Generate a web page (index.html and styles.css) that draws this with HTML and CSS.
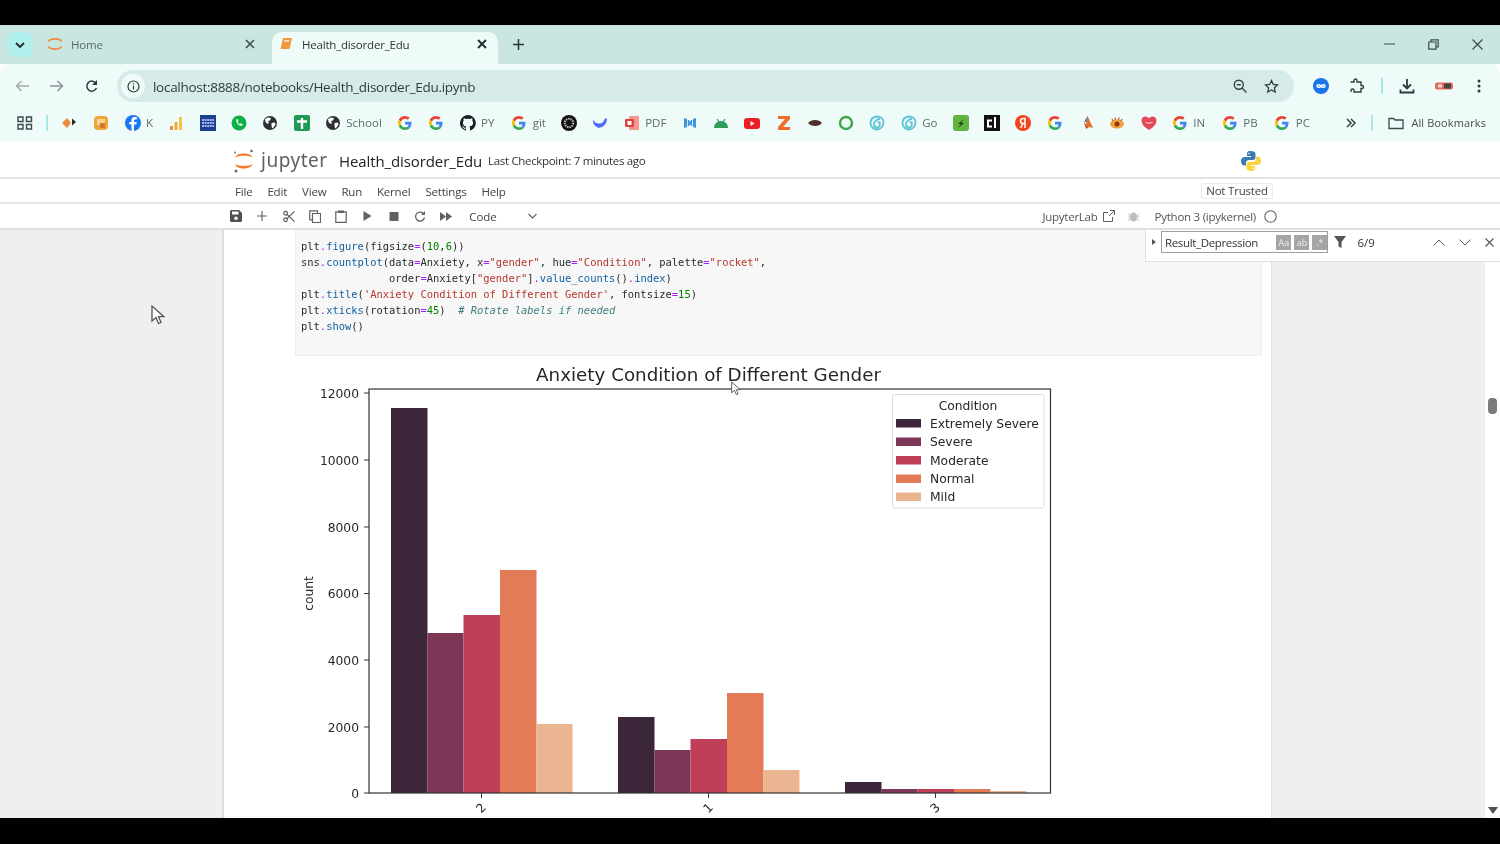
FILE: index.html
```html
<!DOCTYPE html>
<html lang="en">
<head>
<meta charset="utf-8">
<title>Health_disorder_Edu</title>
<link rel="stylesheet" href="styles.css">
</head>
<body>
<svg class="defs" width="0" height="0" aria-hidden="true">
  <defs>
    <symbol id="g" viewBox="0 0 48 48">
      <path fill="#EA4335" d="M24 9.5c3.5 0 6.6 1.2 9.1 3.6l6.8-6.8C35.8 2.4 30.3 0 24 0 14.6 0 6.5 5.4 2.6 13.2l7.9 6.1C12.4 13.6 17.7 9.5 24 9.5z"/>
      <path fill="#4285F4" d="M46.5 24.5c0-1.6-.1-3.1-.4-4.5H24v9h12.7c-.6 3-2.2 5.5-4.7 7.2l7.3 5.7c4.3-4 6.7-9.8 6.7-17.4z"/>
      <path fill="#FBBC05" d="M10.5 28.7c-.5-1.5-.8-3-.8-4.7s.3-3.2.8-4.7l-7.9-6.1C1 16.4 0 20.1 0 24s1 7.6 2.6 10.8l7.9-6.1z"/>
      <path fill="#34A853" d="M24 48c6.5 0 11.9-2.1 15.9-5.8l-7.3-5.7c-2.1 1.4-4.9 2.3-8.6 2.3-6.3 0-11.6-4.2-13.5-9.9l-7.9 6.1C6.5 42.6 14.6 48 24 48z"/>
    </symbol>
    <symbol id="globe" viewBox="0 0 16 16">
      <circle cx="8" cy="8" r="7" fill="#2b2f33"/>
      <path fill="#fff" d="M3 4l3-1.5 3 .5-1 2.5-2 .5L7 8l-1.5 1L3.5 7zM9.5 8l3.5-.5.5 2-2 3-1.5 1-.5-3z"/>
    </symbol>
    <symbol id="wave" viewBox="0 0 16 16">
      <path fill="none" stroke="#5cc6d8" stroke-width="1.8" d="M8 1.5c4 0 6.5 2.7 6.5 6 0 4-3 7-6.5 7S1.5 11.5 1.5 8 4 2 8 1.5zM11 4C7.5 4 5 6.5 5 9.5c0 2 1.5 3 3 3s3-1.3 3-3-1.2-2.5-2.5-2.5"/>
    </symbol>
    <symbol id="cursor" viewBox="0 0 14 20">
      <path fill="#fff" stroke="#555" stroke-width="1.3" d="M1 1v15l4-3.5 2.5 6 2.500-1-2.500-5.800H13z"/>
    </symbol>
  </defs>
</svg>

<div class="blackbar top"></div>
<div class="window">
  <div class="tabstrip">
    <button class="tabsearch"><svg width="10" height="6" viewBox="0 0 10 6"><path d="M1 1l4 4 4-4" fill="none" stroke="#1f2a2a" stroke-width="1.8"/></svg></button>
    <div class="tab inactive">
      <svg class="favicon" width="16" height="16" viewBox="0 0 16 16"><path fill="none" stroke="#f08a3c" stroke-width="1.7" d="M1.5 5.5C3 2 13 2 14.5 5.5M1.5 10.5C3 14 13 14 14.5 10.5"/></svg>
      <span class="tabtitle">Home</span>
      <svg class="tabx" width="10" height="10" viewBox="0 0 10 10"><path d="M1 1l8 8M9 1l-8 8" stroke="#3f4b4b" stroke-width="1.6"/></svg>
    </div>
    <div class="tab active">
      <svg class="favicon" width="14" height="14" viewBox="0 0 14 14"><path fill="#f0983c" d="M4 1h9l-2.5 11H1.5z"/><path fill="#fff" d="M5.5 3.2h5l-.3 1.2h-5z"/></svg>
      <span class="tabtitle">Health_disorder_Edu</span>
      <svg class="tabx" width="10" height="10" viewBox="0 0 10 10"><path d="M1 1l8 8M9 1l-8 8" stroke="#1f2a2a" stroke-width="1.8"/></svg>
    </div>
    <svg class="newtab" width="11" height="11" viewBox="0 0 12 12"><path d="M6 0v12M0 6h12" stroke="#2d3a3a" stroke-width="1.7"/></svg>
    <div class="wincontrols">
      <svg width="11" height="2" viewBox="0 0 11 2"><path d="M0 1h11" stroke="#6e7c7a" stroke-width="1.5"/></svg>
      <svg width="11" height="11" viewBox="0 0 11 11"><path fill="none" stroke="#3e4a4a" stroke-width="1.2" d="M.8 3h7.200v7.200H.8zM3 3V.8h7.200V8H8"/></svg>
      <svg width="11" height="11" viewBox="0 0 11 11"><path d="M.5.5l10 10M10.5.5l-10 10" stroke="#3e4a4a" stroke-width="1.2"/></svg>
    </div>
  </div>

  <div class="toolbar">
    <svg class="navicon" width="14" height="12" viewBox="0 0 14 12"><path fill="none" stroke="#a3adab" stroke-width="1.5" d="M14 6H1.5M6.5 1l-5 5 5 5"/></svg>
    <svg class="navicon" width="14" height="12" viewBox="0 0 14 12"><path fill="none" stroke="#8b9795" stroke-width="1.5" d="M0 6h12.5M7.5 1l5 5-5 5"/></svg>
    <svg class="navicon" width="13" height="13" viewBox="0 0 13 13"><path fill="none" stroke="#2e3a3a" stroke-width="1.5" d="M11 3.3A5 5 0 1 0 11.5 8"/><path fill="#2e3a3a" d="M12 0v5H7z"/></svg>
    <div class="omnibox">
      <span class="infobadge"><svg width="13" height="13" viewBox="0 0 13 13"><circle cx="6.5" cy="6.5" r="5.5" fill="none" stroke="#2e3a3a" stroke-width="1.2"/><path d="M6.5 5.8v3.700M6.5 3.3v1.300" stroke="#2e3a3a" stroke-width="1.3"/></svg></span>
      <span class="url">localhost:8888/notebooks/Health_disorder_Edu.ipynb</span>
      <svg class="omniicon" width="14" height="14" viewBox="0 0 14 14"><circle cx="5.8" cy="5.8" r="4.5" fill="none" stroke="#33403f" stroke-width="1.4"/><path d="M9 9l4.5 4.5M3.8 5.8h4" stroke="#33403f" stroke-width="1.4"/></svg>
      <svg class="omniicon" width="15" height="15" viewBox="0 0 15 15"><path fill="none" stroke="#33403f" stroke-width="1.3" d="M7.5 1.5l1.800 3.900 4.200.5-3.100 2.900.8 4.200-3.700-2.100-3.700 2.100.8-4.200L1.500 5.900l4.200-.5z"/></svg>
    </div>
    <div class="toolicons">
      <svg width="16" height="16" viewBox="0 0 16 16"><circle cx="8" cy="8" r="8" fill="#1a73e8"/><path fill="none" stroke="#fff" stroke-width="1.5" d="M8 8C6.800 6.300 4 6.300 4 8s2.800 1.700 4 0 4-1.700 4 0-2.800 1.700-4 0z"/></svg>
      <svg width="16" height="16" viewBox="0 0 16 16"><path fill="none" stroke="#33403f" stroke-width="1.4" d="M1.500 4h3.500V2.500a1.500 1.500 0 0 1 3 0V4h4v3.500h1a1.500 1.500 0 0 1 0 3h-1V14H5v-1.500a1.500 1.500 0 0 0-3 0V14"/></svg>
      <span class="vsep tool-sep"></span>
      <svg width="16" height="16" viewBox="0 0 16 16"><path fill="none" stroke="#2e3a3a" stroke-width="1.8" d="M8 1v9M4 6.500L8 10.500l4-4M1.500 11.500v3h13v-3"/></svg>
      <svg width="18" height="10" viewBox="0 0 18 10"><rect y="1.5" width="18" height="7" rx="2" fill="#e8695c"/><rect x="9" y="2.5" width="7" height="5" fill="#444"/><rect x="3" y="3.5" width="4" height="3" fill="#ddd"/></svg>
      <svg class="menudots" width="4" height="14" viewBox="0 0 4 14"><circle cx="2" cy="2" r="1.5" fill="#2e3a3a"/><circle cx="2" cy="7" r="1.5" fill="#2e3a3a"/><circle cx="2" cy="12" r="1.5" fill="#2e3a3a"/></svg>
    </div>
  </div>

  <div class="bookmarks">
    <svg class="bm-apps" width="16" height="14" viewBox="0 0 16 14"><path fill="none" stroke="#3c4a4a" stroke-width="1.4" d="M1 1h5v4.500H1zM9.500 1h5v4.500h-5zM1 8.500h5V13H1zM9.500 8.500h5V13h-5z"/></svg>
    <span class="vsep bm-sep"></span>
    <span class="bm"><svg width="16" height="16" viewBox="0 0 16 16"><path fill="#f08a3c" d="M0 8l5-5 4 5-4 5z"/><path fill="#1f2a2a" d="M10 3.500L14 7l-4 3.500z"/></svg></span>
    <span class="bm"><svg width="16" height="16" viewBox="0 0 16 16"><rect x="1" y="1" width="14" height="14" rx="4" fill="#f0a53a"/><rect x="4" y="4" width="8" height="6" fill="#f7d38b"/><rect x="7" y="8" width="5" height="5" fill="#d8752c"/></svg></span>
    <span class="bm"><svg width="16" height="16" viewBox="0 0 16 16"><circle cx="8" cy="8" r="8" fill="#1877f2"/><path fill="#fff" d="M9 16V9.500h2.300l.4-2.500H9V5.600c0-.8.300-1.200 1.300-1.200h1.500V2.200C11.400 2.100 10.600 2 9.800 2 7.700 2 6.500 3.200 6.500 5.300V7H4.300v2.500h2.200V16z"/></svg><span class="bmlabel">K</span></span>
    <span class="bm"><svg width="16" height="16" viewBox="0 0 16 16"><rect x="2" y="11" width="3" height="4" fill="#f08a3c"/><rect x="6.5" y="7" width="3" height="8" fill="#f4a63a"/><rect x="11" y="2" width="3" height="13" fill="#f5c242"/></svg></span>
    <span class="bm"><svg width="16" height="16" viewBox="0 0 16 16"><rect width="16" height="16" fill="#1c3f94"/><path d="M2 5h12M2 8h12M2 11h12" stroke="#cfe0ff" stroke-width="1.6" stroke-dasharray="2 .6"/></svg></span>
    <span class="bm"><svg width="16" height="16" viewBox="0 0 16 16"><circle cx="8" cy="8" r="7.5" fill="#0fb04a"/><path fill="#fff" d="M5 4.500l1.500-.5 1 2-1 1c.5 1 1.200 1.700 2.200 2.200l1-1 2 1-.5 1.500c-3.500.5-6.500-3-5.700-6.200z"/></svg></span>
    <span class="bm"><svg width="16" height="16"><use href="#globe"/></svg></span>
    <span class="bm"><svg width="16" height="16" viewBox="0 0 16 16"><rect width="16" height="16" rx="2" fill="#1f9a54"/><path d="M8 3v11M3 6.500h10" stroke="#fff" stroke-width="2.4"/></svg></span>
    <span class="bm"><svg width="16" height="16"><use href="#globe"/></svg><span class="bmlabel">School</span></span>
    <span class="bm"><svg width="16" height="14"><use href="#g"/></svg></span>
    <span class="bm"><svg width="16" height="14"><use href="#g"/></svg></span>
    <span class="bm"><svg width="16" height="16" viewBox="0 0 16 16"><path fill="#1b1f23" d="M8 0a8 8 0 0 0-2.500 15.600c.4.100.5-.2.500-.4v-1.400c-2.200.5-2.700-1-2.700-1-.4-.9-.9-1.200-.9-1.200-.7-.5.100-.5.100-.5.800.1 1.200.8 1.200.8.700 1.200 1.900.9 2.300.7.100-.5.300-.9.500-1.100-1.800-.2-3.600-.9-3.600-4 0-.9.300-1.600.8-2.100-.1-.2-.4-1 .1-2.100 0 0 .7-.2 2.200.8a7.600 7.600 0 0 1 4 0c1.500-1 2.200-.8 2.200-.8.400 1.100.2 1.900.1 2.100.5.600.8 1.300.8 2.100 0 3.100-1.900 3.700-3.700 3.900.3.300.6.800.6 1.500v2.200c0 .2.100.5.600.4A8 8 0 0 0 8 0z"/></svg><span class="bmlabel w">PY</span></span>
    <span class="bm"><svg width="16" height="14"><use href="#g"/></svg><span class="bmlabel">git</span></span>
    <span class="bm"><svg width="16" height="16" viewBox="0 0 16 16"><circle cx="8" cy="8" r="8" fill="#111"/><circle cx="8" cy="8" r="4.2" fill="none" stroke="#bbb" stroke-width="2" stroke-dasharray="1.500 .8"/></svg></span>
    <span class="bm"><svg width="16" height="16" viewBox="0 0 16 16"><path fill="#4d6bfe" d="M1 5c2 3 4 3.500 7 3.500 2 0 4-2 4.500-4.500L15 3c0 3-1 5.500-3 7.500S7 14 4 11.500 1 7 1 5z"/><circle cx="9" cy="7" r="1" fill="#fff"/></svg></span>
    <span class="bm"><svg width="16" height="16" viewBox="0 0 16 16"><rect x="5" y="1" width="10" height="14" rx="1" fill="#f4978e"/><rect x="1" y="4" width="9" height="8" rx="1" fill="#e0403a"/><rect x="3.5" y="6" width="4" height="4" fill="#fff"/></svg><span class="bmlabel">PDF</span></span>
    <span class="bm"><svg width="16" height="16" viewBox="0 0 16 16"><path fill="#3e95e0" d="M2 3l3 1v8l-3 1zM14 3l-3 1v8l3 1z"/><path d="M6.500 5v6M9.500 5v6M8 6v4" stroke="#3e95e0" stroke-width="1.4"/></svg></span>
    <span class="bm"><svg width="16" height="16" viewBox="0 0 16 16"><path fill="#2f9e5b" d="M1 13c0-4 3-7 7-7s7 3 7 7z"/><path d="M4 4l2 3M12 4l-2 3" stroke="#2f9e5b" stroke-width="1.2"/></svg></span>
    <span class="bm"><svg width="16" height="16" viewBox="0 0 16 16"><rect y="3" width="16" height="11" rx="3" fill="#ee1c25"/><path fill="#fff" d="M6.500 6v5l4-2.500z"/></svg></span>
    <span class="bm"><svg width="16" height="16" viewBox="0 0 16 16"><path fill="#f26b2a" d="M2 1h12v3L7 12h7v3H2v-3l7-8H2z"/></svg></span>
    <span class="bm"><svg width="16" height="16" viewBox="0 0 16 16"><path fill="#4b3226" d="M1 8c3-4 11-4 14 0-3 4-11 4-14 0z"/></svg></span>
    <span class="bm"><svg width="16" height="16" viewBox="0 0 16 16"><circle cx="8" cy="8" r="6" fill="none" stroke="#3aa648" stroke-width="2.4"/></svg></span>
    <span class="bm"><svg width="16" height="16"><use href="#wave"/></svg></span>
    <span class="bm"><svg width="16" height="16"><use href="#wave"/></svg><span class="bmlabel">Go</span></span>
    <span class="bm"><svg width="16" height="16" viewBox="0 0 16 16"><rect width="16" height="16" rx="3" fill="#62b33f"/><path d="M5 9l6-5-3 4h3l-6 5 3-4z" fill="#143d14"/></svg></span>
    <span class="bm"><svg width="16" height="16" viewBox="0 0 16 16"><rect width="16" height="16" fill="#111"/><path fill="none" stroke="#fff" stroke-width="2" d="M8 5.500H4v6h4M11 2v11"/></svg></span>
    <span class="bm"><svg width="16" height="16" viewBox="0 0 16 16"><circle cx="8" cy="8" r="8" fill="#f0441f"/><path fill="none" stroke="#fff" stroke-width="1.5" d="M10 13V3.500H8a2.500 2.500 0 0 0 0 5h2M8 8.500L5.500 13"/></svg></span>
    <span class="bm"><svg width="16" height="14"><use href="#g"/></svg></span>
    <span class="bm"><svg width="16" height="16" viewBox="0 0 16 16"><path fill="#2d78c4" d="M1 9l5-1.500L9.500 1 11 6z"/><path fill="#e8722c" d="M9.500 1L15 13l-4-1-3-3z"/><path fill="#c94f24" d="M6 7.500L11 12l-3 2z"/></svg></span>
    <span class="bm"><svg width="16" height="16" viewBox="0 0 16 16"><ellipse cx="8" cy="9" rx="7" ry="4.500" fill="#f0a340"/><circle cx="8" cy="9" r="2.500" fill="#8a3b12"/><path d="M3 4l1 2M6 2.500l.5 2.500M10 2.500L9.500 5M13 4l-1 2" stroke="#b9551b" stroke-width="1.2"/></svg></span>
    <span class="bm"><svg width="16" height="16" viewBox="0 0 16 16"><path fill="#e2495a" d="M8 15C3 12 .5 9 .5 5.500 .5 3 2.500 1.500 4.500 1.500c1.500 0 2.700.7 3.500 2 .8-1.300 2-2 3.500-2 2 0 4 1.500 4 4C15.500 9 13 12 8 15z"/><path fill="#fbdde0" d="M4 6.500c2 1.500 6 1.500 8 0-1 3-7 3-8 0z"/></svg></span>
    <span class="bm"><svg width="16" height="14"><use href="#g"/></svg><span class="bmlabel w">IN</span></span>
    <span class="bm"><svg width="16" height="14"><use href="#g"/></svg><span class="bmlabel w">PB</span></span>
    <span class="bm"><svg width="16" height="14"><use href="#g"/></svg><span class="bmlabel w">PC</span></span>
    <svg class="bm-more" width="10" height="10" viewBox="0 0 10 10"><path fill="none" stroke="#33403f" stroke-width="1.5" d="M1 1l4 4-4 4M5 1l4 4-4 4"/></svg>
    <span class="vsep"></span>
    <span class="allbm"><svg width="16" height="13" viewBox="0 0 16 13"><path fill="none" stroke="#3c4a4a" stroke-width="1.3" d="M1 11.500V1.500h4.500L7 3h8v8.500z"/></svg><span class="bmlabel">All Bookmarks</span></span>
  </div>

  <div class="jp-header">
    <div class="jp-brand">
      <svg width="24" height="26" viewBox="0 0 24 26"><path fill="#f37726" d="M3 9.500C5 4 18 4 21 9.500 18 7 6 7 3 9.500zM3 16c3 2.600 15 2.600 18 0-3 6-16 6-18 0z"/><circle cx="19.5" cy="3" r="1.3" fill="#6d6d6d"/><circle cx="4" cy="23" r="1.5" fill="#6d6d6d"/><circle cx="3" cy="4.5" r=".9" fill="#6d6d6d"/></svg>
      <span class="jp-word">jupyter</span>
    </div>
    <span class="jp-title">Health_disorder_Edu</span>
    <span class="jp-check">Last Checkpoint: 7 minutes ago</span>
    <svg class="jp-python" width="22" height="22" viewBox="0 0 22 22"><path fill="#3d7cb0" d="M10.800 1C7 1 7 2.600 7 4v2h4v1H4.500C2.500 7 1 8.500 1 11s1.500 4.500 3 4.500h2V13c0-1.800 1.500-3 3-3h4c1.500 0 2.500-1 2.500-2.500V4c0-1.800-1.800-3-4.700-3z"/><path fill="#fdd23e" d="M11.200 21c3.800 0 3.800-1.600 3.800-3v-2h-4v-1h6.500c2 0 3.500-1.500 3.500-4s-1.500-4.500-3-4.500h-2V9c0 1.800-1.500 3-3 3H9c-1.500 0-2.500 1-2.500 2.500V18c0 1.800 1.800 3 4.700 3z"/><circle cx="9" cy="3.500" r=".8" fill="#fff"/><circle cx="13" cy="18.500" r=".8" fill="#fff"/></svg>
  </div>
  <div class="jp-menu">
    <span>File</span><span>Edit</span><span>View</span><span>Run</span><span>Kernel</span><span>Settings</span><span>Help</span>
    <span class="trust">Not Trusted</span>
  </div>
  <div class="jp-tools">
    <svg width="12" height="12" viewBox="0 0 12 12"><path fill="#505050" d="M0 1.500C0 .7.700 0 1.500 0H9l3 3v7.500c0 .8-.7 1.500-1.500 1.500h-9C.7 12 0 11.300 0 10.500z"/><rect x="2" y="1.5" width="6.5" height="3" fill="#fff"/><circle cx="6" cy="8.300" r="1.8" fill="#fff"/></svg>
    <svg width="10" height="10" viewBox="0 0 10 10"><path d="M5 0v10M0 5h10" stroke="#616161" stroke-width="1.2"/></svg>
    <svg width="13" height="13" viewBox="0 0 13 13"><circle cx="2.8" cy="3" r="2" fill="none" stroke="#555" stroke-width="1.2"/><circle cx="2.8" cy="10" r="2" fill="none" stroke="#555" stroke-width="1.2"/><path d="M4.300 4.300L12.500 12M4.300 8.700L12.500 1" stroke="#555" stroke-width="1.2"/></svg>
    <svg width="12" height="13" viewBox="0 0 12 13"><path fill="none" stroke="#616161" stroke-width="1.2" d="M3.500 3.500h8v9h-8zM8.500 3.500V.8H.8v9h2.700"/></svg>
    <svg width="12" height="13" viewBox="0 0 12 13"><path fill="none" stroke="#616161" stroke-width="1.2" d="M3 1.800H.8v10.600h10.400V1.800H9"/><rect x="3" y=".5" width="6" height="2.500" fill="#616161"/></svg>
    <svg width="9" height="10" viewBox="0 0 9 10"><path fill="#616161" d="M1 0l8 5-8 5z"/></svg>
    <svg width="9" height="9" viewBox="0 0 9 9"><rect width="9" height="9" fill="#616161"/></svg>
    <svg width="11" height="11" viewBox="0 0 11 11"><path fill="none" stroke="#616161" stroke-width="1.2" d="M9.300 3A4.500 4.500 0 1 0 10 6.500"/><path fill="#616161" d="M10.500 0v4h-4z"/></svg>
    <svg width="12" height="9" viewBox="0 0 12 9"><path fill="#616161" d="M0 0l6 4.500L0 9zM6 0l6 4.500L6 9z"/></svg>
    <span class="celltype">Code<svg width="9" height="6" viewBox="0 0 9 6"><path fill="none" stroke="#616161" stroke-width="1.1" d="M.5 1l4 4 4-4"/></svg></span>
    <span class="jp-right">
      <span>JupyterLab</span>
      <svg width="12" height="12" viewBox="0 0 12 12"><path fill="none" stroke="#616161" stroke-width="1" d="M9.500 7v4.500H.5v-9H5M7 .5h4.500V5M11.500.5L6 6"/></svg>
      <svg class="bug" width="11" height="12" viewBox="0 0 11 12"><ellipse cx="5.500" cy="7" rx="3.500" ry="4.500" fill="#bdbdbd"/><path d="M0 4l2 1.500M11 4L9 5.500M0 7h2M9 7h2M0 10.500L2 9M11 10.500L9 9" stroke="#bdbdbd"/></svg>
      <span class="kernel">Python 3 (ipykernel)</span>
      <svg width="13" height="13" viewBox="0 0 13 13"><circle cx="6.500" cy="6.500" r="5.700" fill="none" stroke="#616161" stroke-width="1.1"/></svg>
    </span>
  </div>

  <div class="nb-main">
    <div class="nb-panel">
      <div class="cell-input">
<pre class="code"><span class="n">plt</span><span class="o">.</span><span class="f">figure</span><span class="n">(figsize</span><span class="o">=</span><span class="n">(</span><span class="m">10</span><span class="n">,</span><span class="m">6</span><span class="n">))</span>
<span class="n">sns</span><span class="o">.</span><span class="f">countplot</span><span class="n">(data</span><span class="o">=</span><span class="n">Anxiety, x</span><span class="o">=</span><span class="s">"gender"</span><span class="n">, hue</span><span class="o">=</span><span class="s">"Condition"</span><span class="n">, palette</span><span class="o">=</span><span class="s">"rocket"</span><span class="n">,</span>
              <span class="n">order</span><span class="o">=</span><span class="n">Anxiety[</span><span class="s">"gender"</span><span class="n">]</span><span class="o">.</span><span class="f">value_counts</span><span class="n">()</span><span class="o">.</span><span class="f">index</span><span class="n">)</span>
<span class="n">plt</span><span class="o">.</span><span class="f">title</span><span class="n">(</span><span class="s">'Anxiety Condition of Different Gender'</span><span class="n">, fontsize</span><span class="o">=</span><span class="m">15</span><span class="n">)</span>
<span class="n">plt</span><span class="o">.</span><span class="f">xticks</span><span class="n">(rotation</span><span class="o">=</span><span class="m">45</span><span class="n">)  </span><span class="c"># Rotate labels if needed</span>
<span class="n">plt</span><span class="o">.</span><span class="f">show</span><span class="n">()</span></pre>
      </div>
      <svg class="chart" width="780" height="462" viewBox="295 356 780 462">
        <text x="708.5" y="381" class="c-title" text-anchor="middle">Anxiety Condition of Different Gender</text>
        <g fill="#3c2639">
          <rect x="391" y="408" width="36.5" height="385"/><rect x="618" y="717" width="36.5" height="76"/><rect x="845" y="782" width="36.5" height="11"/>
        </g>
        <g fill="#7d3656">
          <rect x="427.5" y="633" width="36" height="160"/><rect x="654.5" y="750" width="36" height="43"/><rect x="881.5" y="789" width="36" height="4"/>
        </g>
        <g fill="#bf3f58">
          <rect x="463.5" y="615" width="36.5" height="178"/><rect x="690.5" y="739" width="36.5" height="54"/><rect x="917.5" y="789" width="36.5" height="4"/>
        </g>
        <g fill="#e47b57">
          <rect x="500" y="570" width="36.5" height="223"/><rect x="727" y="693" width="36.5" height="100"/><rect x="954" y="789" width="36.5" height="4"/>
        </g>
        <g fill="#ebb592">
          <rect x="536.5" y="724" width="36" height="69"/><rect x="763.5" y="770" width="36" height="23"/><rect x="990.5" y="791" width="36" height="2"/>
        </g>
        <rect x="369" y="389" width="681.5" height="404" fill="none" stroke="#333" stroke-width="1.2"/>
        <g stroke="#333" stroke-width="1">
          <path d="M364 393h5M364 460h5M364 527h5M364 593.5h5M364 660h5M364 727h5M364 793h5M481.5 793v5M708.5 793v5M935.5 793v5"/>
        </g>
        <g class="c-tick" text-anchor="end">
          <text x="359" y="398">12000</text><text x="359" y="465">10000</text><text x="359" y="531.5">8000</text><text x="359" y="598">6000</text><text x="359" y="664.5">4000</text><text x="359" y="731.5">2000</text><text x="359" y="798">0</text>
        </g>
        <text class="c-label" transform="translate(313 593.5) rotate(-90)" text-anchor="middle">count</text>
        <g class="c-tick" text-anchor="middle">
          <text transform="translate(484 811) rotate(-45)">2</text><text transform="translate(711 811) rotate(-45)">1</text><text transform="translate(938 811) rotate(-45)">3</text>
        </g>
        <rect x="892.5" y="394.5" width="151.5" height="113.5" rx="2" fill="#fff" stroke="#dcdcdc"/>
        <text x="968" y="410" class="c-tick" text-anchor="middle">Condition</text>
        <rect x="896" y="419" width="25" height="8.5" fill="#3c2639"/>
        <rect x="896" y="437.5" width="25" height="8.5" fill="#7d3656"/>
        <rect x="896" y="456" width="25" height="8.5" fill="#bf3f58"/>
        <rect x="896" y="474.5" width="25" height="8.5" fill="#e47b57"/>
        <rect x="896" y="492.5" width="25" height="8.5" fill="#ebb592"/>
        <g class="c-tick">
          <text x="930" y="428">Extremely Severe</text><text x="930" y="446">Severe</text><text x="930" y="465">Moderate</text><text x="930" y="483">Normal</text><text x="930" y="501">Mild</text>
        </g>
      </svg>
    </div>
    <div class="search">
      <svg width="4" height="6" viewBox="0 0 4 6"><path fill="#555" d="M0 0l4 3-4 3z"/></svg>
      <div class="search-input">
        <span class="search-text">Result_Depression</span>
        <span class="opt">Aa</span><span class="opt">ab</span><span class="opt">.*</span>
      </div>
      <svg width="12" height="12" viewBox="0 0 12 12"><path fill="#555" d="M0 0h12L7.500 6v6l-3-1.500V6z"/></svg>
      <span class="count">6/9</span>
      <svg class="s-up" width="12" height="7" viewBox="0 0 12 7"><path fill="none" stroke="#616161" stroke-width="1" d="M.5 6.500L6 1l5.500 5.500"/></svg>
      <svg class="s-down" width="12" height="7" viewBox="0 0 12 7"><path fill="none" stroke="#616161" stroke-width="1" d="M.5.500L6 6l5.500-5.500"/></svg>
      <svg class="s-x" width="9" height="9" viewBox="0 0 9 9"><path stroke="#555" stroke-width="1.1" d="M.5.500l8 8M8.500.500l-8 8"/></svg>
    </div>
    <div class="scrollbar">
      <span class="thumb"></span>
      <svg class="arrow" width="10" height="7" viewBox="0 0 10 7"><path fill="#505050" d="M0 0h10L5 7z"/></svg>
    </div>
    <svg class="pointer p1" width="14" height="20"><use href="#cursor"/></svg>
    <svg class="pointer p2" width="10" height="15"><use href="#cursor"/></svg>
  </div>
</div>
<div class="blackbar bottom"></div>
</body>
</html>
```
FILE: styles.css
```css
* { box-sizing: border-box; }
html, body { margin: 0; height: 100%; overflow: hidden; }
body {
  width: 1500px;
  height: 844px;
  display: flex;
  flex-direction: column;
  background: #000;
  font-family: "Open Sans", "Noto Sans", sans-serif;
  color: #333;
}
.defs { position: absolute; }
.blackbar { background: #000; flex: none; }
.blackbar.top { height: 25px; }
.blackbar.bottom { height: 26px; }
.window {
  height: 793px;
  display: flex;
  flex-direction: column;
  background: #fff;
  overflow: hidden;
  filter: blur(0.4px);
}

/* tabs */
.tabstrip {
  height: 39px;
  flex: none;
  background: #c9e6e0;
  display: flex;
  align-items: stretch;
  padding: 7px 0 0 7px;
}
.tabsearch {
  width: 26px;
  height: 25px;
  border: 0;
  border-radius: 8px;
  background: #b1f0ec;
  display: flex;
  align-items: center;
  justify-content: center;
  padding: 0;
}
.tab {
  display: flex;
  align-items: center;
  font-size: 11.5px;
  letter-spacing: -0.2px;
}
.tab.inactive { width: 239px; padding: 0 17px 8px 14px; color: #5f6b6a; }
.tab.inactive .favicon { margin-right: 8px; }
.tab.active {
  width: 226px;
  padding: 0 11px 8px 7px;
  background: #effbf8;
  border-radius: 10px 10px 0 0;
  color: #2b3534;
}
.tab .favicon { margin-right: 9px; flex: none; }
.tabtitle { flex: 1; }
.newtab { margin: 7px 0 0 15px; }
.wincontrols {
  margin-left: auto;
  display: flex;
  align-items: center;
  gap: 33px;
  padding: 0 17px 8px 0;
}

/* toolbar */
.toolbar {
  height: 41px;
  flex: none;
  background: #effbf8;
  border-radius: 10px 10px 0 0;
  display: flex;
  align-items: center;
  padding: 3px 16px 0 15px;
  gap: 21px;
}
.navicon { flex: none; }
.omnibox {
  margin-left: -2px;
  width: 1177px;
  height: 32px;
  background: #d6ebe7;
  border-radius: 16px;
  display: flex;
  align-items: center;
  padding: 0 15px 0 4px;
}
.infobadge {
  width: 24px;
  height: 24px;
  border-radius: 50%;
  background: #effbf8;
  display: flex;
  align-items: center;
  justify-content: center;
}
.url {
  font-size: 13.5px;
  letter-spacing: -0.29px;
  margin: 1px 0 0 8px;
  color: #2f3b3a;
  flex: 1;
}
.omniicon { margin-left: 17px; flex: none; }
.toolicons {
  margin-left: -2px;
  display: flex;
  align-items: center;
  gap: 20px;
}
.menudots { margin-left: 4px; }
.vsep { width: 2px; height: 16px; background: #a7e8e4; flex: none; }
.tool-sep { margin: 0 -4px; }

/* bookmarks */
.bookmarks {
  height: 36px;
  flex: none;
  background: #effbf8;
  display: flex;
  align-items: center;
  padding: 0 14px 0 17px;
  gap: 15.3px;
}
.bm-sep { margin: 0 -1.6px 0 -2px; }
.bm { display: flex; align-items: center; gap: 5.4px; flex: none; }
.bm svg { flex: none; }
.bmlabel {
  font-size: 11.5px;
  color: #5f6b6a;
  margin-top: -2px;
}
.bmlabel.w { margin-right: 1.5px; }
.bm-more { margin-left: auto; }
.allbm { display: flex; align-items: center; gap: 7px; }
.allbm .bmlabel { color: #444f4e; font-size: 11px; letter-spacing: 0.1px; }

/* jupyter */
.jp-header {
  height: 38px;
  flex: none;
  display: flex;
  align-items: center;
  padding: 3px 0 0 232px;
  border-bottom: 2px solid #e4e4e4;
  background: #fff;
}
.jp-brand { display: flex; align-items: center; gap: 5px; width: 106px; }
.jp-word {
  font-family: "Noto Sans", sans-serif;
  font-size: 19px;
  color: #616161;
  letter-spacing: 0.5px;
  line-height: 1;
  margin-top: -1px;
}
.jp-title { font-size: 15px; letter-spacing: -0.1px; color: #222; margin-left: 1px; }
.jp-check { font-size: 11.5px; color: #333; margin-left: 6px; letter-spacing: -0.33px; }
.jp-python { margin-left: 595px; }
.jp-menu {
  height: 25px;
  flex: none;
  display: flex;
  align-items: center;
  gap: 15px;
  padding: 1px 227px 0 235px;
  font-size: 11.5px;
  letter-spacing: -0.2px;
  border-bottom: 2px solid #e4e4e4;
  color: #424242;
}
.trust {
  margin: -1px 0 0 auto;
  height: 16px;
  width: 72px;
  line-height: 14px;
  text-align: center;
  border: 1px solid #ececec;
  border-radius: 2px;
  font-size: 11.5px;
}
.jp-tools {
  height: 26px;
  flex: none;
  display: flex;
  align-items: center;
  padding: 0 223px 0 230px;
  gap: 14.3px;
  font-size: 11.5px;
  border-bottom: 2px solid #e0e0e0;
  color: #424242;
}
.jp-tools > svg { width: 12px; flex: none; }
.celltype {
  display: flex;
  align-items: center;
  justify-content: space-between;
  width: 67.5px;
  margin-left: 2.7px;
  letter-spacing: -0.1px;
}
.jp-right { margin-left: auto; display: flex; align-items: center; gap: 5px; color: #555; letter-spacing: -0.25px; }
.bug { margin: 0 11px 0 8px; }
.kernel { margin-right: 3px; }

/* notebook */
.nb-main {
  position: relative;
  flex: 1;
  min-height: 0;
  background: #efefef;
  padding-left: 222px;
  overflow: hidden;
}
.nb-panel {
  width: 1050px;
  height: 100%;
  background: #fff;
  border-left: 2px solid #dedede;
  border-right: 1px solid #e2e2e2;
  padding-left: 71px;
}
.cell-input {
  width: 967px;
  height: 126px;
  background: #f7f7f7;
  border: 1px solid #eeeeee;
  border-top: 0;
  padding: 8px 0 0 5px;
}
.code {
  margin: 0;
  font-family: "DejaVu Sans Mono", "Liberation Mono", monospace;
  font-size: 10.44px;
  line-height: 16px;
  color: #222;
}
.n { color: #2a2a2a; }
.f { color: #0f5f9e; }
.o { color: #aa22ff; }
.m { color: #008000; }
.s { color: #b5372c; }
.c { color: #408080; font-style: italic; }
.chart { display: block; }
.chart text { font-family: "DejaVu Sans", sans-serif; fill: #262626; }
.c-title { font-size: 18.3px; }
.c-tick { font-size: 12.3px; }
.c-label { font-size: 12.3px; }

.search {
  position: absolute;
  top: 0;
  right: 0;
  width: 355px;
  height: 32px;
  background: #fff;
  border-left: 1px solid #e0e0e0;
  border-bottom: 1px solid #e0e0e0;
  display: flex;
  align-items: center;
  padding: 0 6px 7px 6px;
  font-size: 11.5px;
  color: #333;
}
.search-input {
  width: 169px;
  height: 22px;
  margin-left: 5px;
  border: 1px solid #9e9e9e;
  display: flex;
  align-items: center;
  padding: 0 0 0 3px;
  gap: 3px;
}
.search-text { flex: 1; letter-spacing: -0.35px; }
.opt {
  width: 15px;
  height: 15px;
  background: #a5a5a5;
  color: #eee;
  font-size: 9px;
  line-height: 15px;
  text-align: center;
}
.search svg { flex: none; }
.search-input + svg { margin-left: 6px; }
.count { margin-left: 11px; width: 40px; }
.s-up { margin-left: 36px; }
.s-down { margin-left: 14px; }
.s-x { margin-left: 14px; }
.scrollbar {
  position: absolute;
  right: 0;
  top: 32px;
  bottom: 0;
  width: 15px;
  background: #fff;
  display: flex;
  flex-direction: column;
  align-items: center;
  justify-content: flex-end;
  padding-bottom: 4px;
}
.thumb {
  position: absolute;
  top: 136px;
  left: 3px;
  width: 9px;
  height: 16px;
  border-radius: 4px;
  background: #7a7a7a;
}
.pointer { position: absolute; }
.p1 { left: 151px; top: 75px; }
.p2 { left: 731px; top: 151px; }
```
